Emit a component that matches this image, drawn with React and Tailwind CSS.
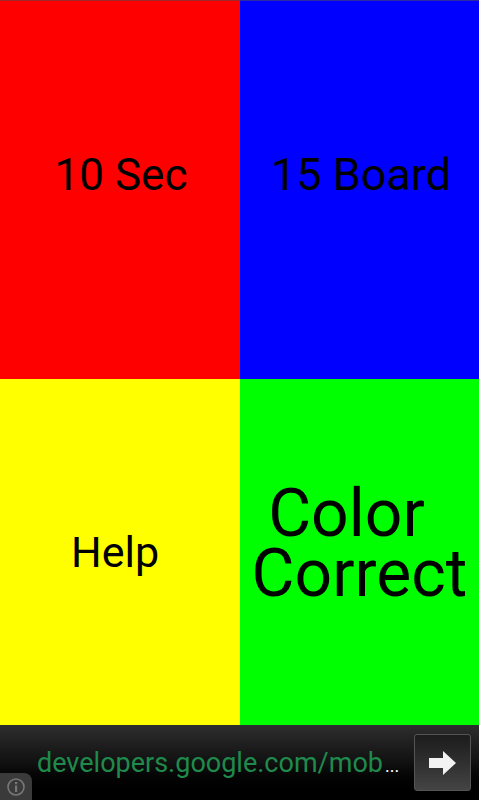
function InfoBadge() {
  return (
    <div className="absolute bottom-0 left-0 w-[32px] h-[27px] bg-[#3a3a3a] rounded-tr-[8px] flex items-center justify-center">
      <svg width="20" height="20" viewBox="0 0 20 20" fill="none">
        <circle cx="10" cy="10" r="8" stroke="#777" strokeWidth="1.6" />
        <rect x="9" y="8.5" width="2.2" height="6.5" fill="#777" />
        <rect x="9" y="5" width="2.2" height="2.2" fill="#777" />
      </svg>
    </div>
  );
}

export default function App() {
  return (
    <div className="relative w-[479px] h-[800px] flex flex-col overflow-hidden font-['Roboto',sans-serif] text-black">
      <div className="grid grid-cols-[240px_239px] grid-rows-[379px_346px] h-[725px]">
        <div className="bg-[#ff0000] border-t border-[#a02a2a] flex items-center justify-center pb-[31px] pl-[2px] text-[44px]">10 Sec</div>
        <div className="bg-[#0000ff] border-t border-[#2a2aa0] flex items-center justify-center pb-[31px] pl-[3px] text-[45px]">15 Board</div>
        <div className="bg-[#ffff00] flex items-center justify-center pr-[10px] text-[43px]">Help</div>
        <div className="bg-[#00ff00] flex items-center justify-center pb-[16px] text-[66px] leading-[60px] text-center">
          <span>
            <span className="pr-[26px]">Color</span>
            <br />
            Correct
          </span>
        </div>
      </div>

      <div className="h-[75px] flex items-center pl-[37px] pr-[8px] bg-gradient-to-b from-[#2e2e2e] via-[#111111] to-black">
        <span className="text-[27px] text-[#1f8a4c] leading-none mt-[1px]">developers.google.com/mob</span>
        <span className="text-[18px] text-white self-end mb-[25px] ml-[2px] leading-none">...</span>
        <button className="ml-auto w-[57px] h-[57px] rounded-[3px] border border-[#555] bg-gradient-to-b from-[#1c1c1c] to-[#444444] flex items-center justify-center">
          <svg width="28" height="24" viewBox="0 0 28 24" fill="#f2f2f2">
            <path d="M0 7h14V0l13 12-13 12v-7H0z" />
          </svg>
        </button>
      </div>

      <InfoBadge />
    </div>
  );
}
